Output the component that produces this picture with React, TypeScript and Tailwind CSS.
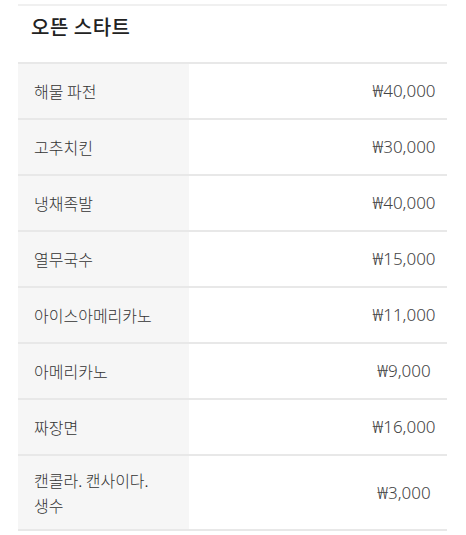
import React from 'react';

const menu = [
  { name: '해물 파전', price: '₩40,000' },
  { name: '고추치킨', price: '₩30,000' },
  { name: '냉채족발', price: '₩40,000' },
  { name: '열무국수', price: '₩15,000' },
  { name: '아이스아메리카노', price: '₩11,000' },
  { name: '아메리카노', price: '₩9,000' },
  { name: '짜장면', price: '₩16,000' },
  { name: '캔콜라. 캔사이다.\n생수', price: '₩3,000' }
];

const App = () => {
  return (
    <div
      className="w-[466px] h-[535px] bg-white overflow-hidden"
      style={{ fontFamily: '"Noto Sans CJK KR", "Noto Sans", sans-serif' }}
    >
      <div className="ml-[18px] mr-[19px] mt-[4px] border-t-2 border-[#f0f0f0]">
        <h2 className="pl-[13px] pt-[6px] h-[56px] text-[20px] font-medium text-[#222] tracking-[0.5px]">
          오뜬 스타트
        </h2>
        <div className="border-b-2 border-[#e8e8e8]">
          {menu.map((item, index) => (
            <div
              key={index}
              className={`flex border-t-2 border-[#e8e8e8] ${
                index === menu.length - 1 ? 'h-[75px]' : 'h-[56px]'
              }`}
            >
              <div className="w-[171px] bg-[#f6f6f6] flex items-center pl-[16px] text-[16px] leading-[25px] font-light text-[#333] whitespace-pre-line">
                {item.name}
              </div>
              <div className="flex-1 flex items-center justify-end">
                <span className="w-[86px] text-center text-[17px] font-light text-[#444] font-['Noto_Sans',sans-serif]">
                  {item.price}
                </span>
              </div>
            </div>
          ))}
        </div>
      </div>
    </div>
  );
};

export default App;
